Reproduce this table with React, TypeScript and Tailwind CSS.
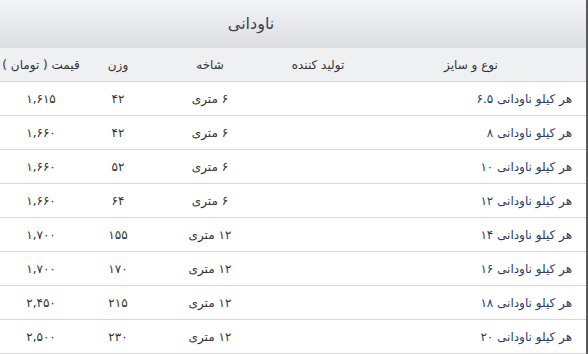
import React from "react";

const rows = [
  { name: "هر کیلو ناودانی ۶.۵", shakhe: "۶ متری", vazn: "۴۲", price: "۱,۶۱۵" },
  { name: "هر کیلو ناودانی ۸", shakhe: "۶ متری", vazn: "۴۲", price: "۱,۶۶۰" },
  { name: "هر کیلو ناودانی ۱۰", shakhe: "۶ متری", vazn: "۵۲", price: "۱,۶۶۰" },
  { name: "هر کیلو ناودانی ۱۲", shakhe: "۶ متری", vazn: "۶۴", price: "۱,۶۶۰" },
  { name: "هر کیلو ناودانی ۱۴", shakhe: "۱۲ متری", vazn: "۱۵۵", price: "۱,۷۰۰" },
  { name: "هر کیلو ناودانی ۱۶", shakhe: "۱۲ متری", vazn: "۱۷۰", price: "۱,۷۰۰" },
  { name: "هر کیلو ناودانی ۱۸", shakhe: "۱۲ متری", vazn: "۲۱۵", price: "۲,۴۵۰" },
  { name: "هر کیلو ناودانی ۲۰", shakhe: "۱۲ متری", vazn: "۲۳۰", price: "۲,۵۰۰" },
];

const cols = "grid grid-cols-[82px_72px_112px_104px_1fr] items-center h-[34px]";

export default function App() {
  return (
    <div
      className="w-[588px] h-[354px] overflow-hidden bg-white border-r-2 border-[#5a5a5a] text-[12px] text-[#333]"
      style={{ fontFamily: '"DejaVu Sans", Tahoma, sans-serif' }}
    >
      <div
        dir="rtl"
        className="h-[48px] flex items-center justify-center bg-gradient-to-b from-[#f4f4f6] to-[#dcdde1] text-[16px] text-[#3f3f4a] pr-[84px]"
      >
        ناودانی
      </div>
      <div className={`${cols} bg-[#eff0f2] border-b border-[#d2d2d2] text-[#333]`}>
        <div dir="rtl" className="text-center">قیمت ( تومان )</div>
        <div dir="rtl" className="text-center">وزن</div>
        <div dir="rtl" className="text-center">شاخه</div>
        <div dir="rtl" className="text-center">تولید کننده</div>
        <div dir="rtl" className="text-center pr-[14px]">نوع و سایز</div>
      </div>
      {rows.map((r, i) => (
        <div key={i} className={`${cols} border-b border-[#d6d6d6]`}>
          <div dir="rtl" className="text-center">{r.price}</div>
          <div dir="rtl" className="text-center">{r.vazn}</div>
          <div dir="rtl" className="text-center">{r.shakhe}</div>
          <div></div>
          <div dir="rtl" className="text-right pr-[14px] text-[#1f3d6e]">{r.name}</div>
        </div>
      ))}
    </div>
  );
}
